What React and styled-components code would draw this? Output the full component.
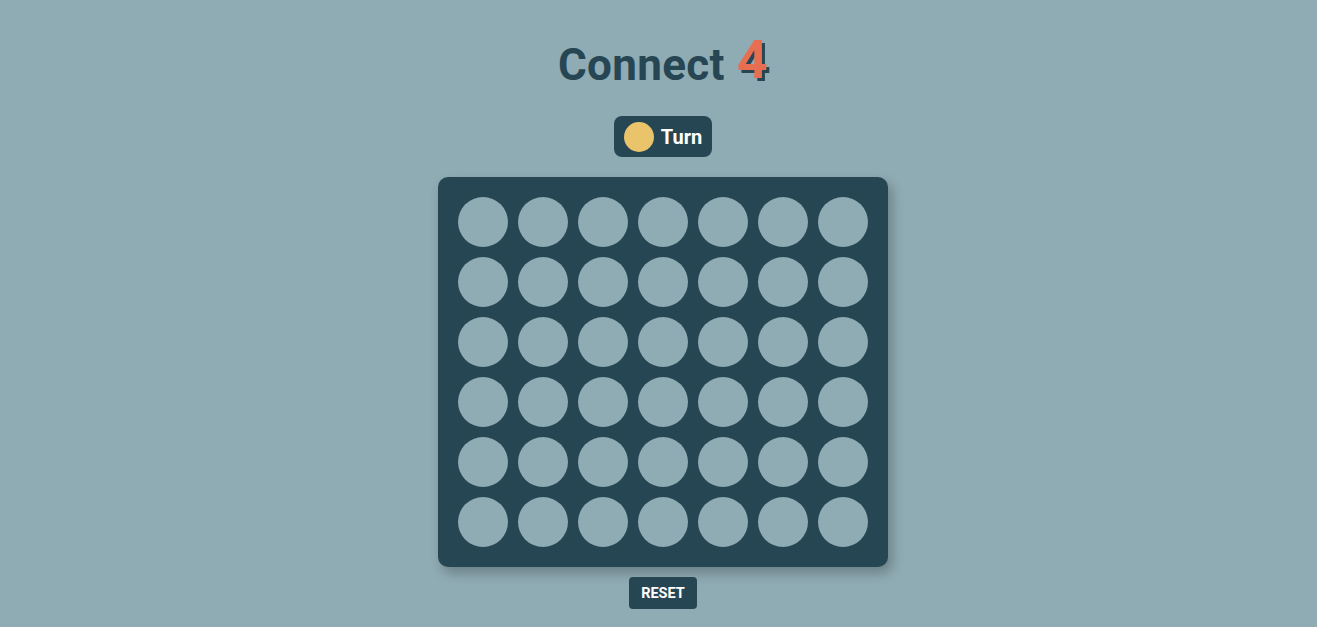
import React, { useState } from "react";
import styled, { createGlobalStyle } from "styled-components";

const GlobalStyle = createGlobalStyle`
  html, body {
    margin: 0;
    padding: 0;
    background: #8fabb3;
    font-family: Roboto, "Liberation Sans", sans-serif;
  }
`;

const Page = styled.div`
  min-height: 627px;
  display: flex;
  flex-direction: column;
  align-items: center;
  padding: 35px 0 0 9px;
  box-sizing: border-box;
`;

const Title = styled.h1`
  margin: 0;
  height: 61px;
  display: flex;
  align-items: flex-end;
  color: #264653;
  font-size: 44px;
  font-weight: 700;
  letter-spacing: 0.3px;
  line-height: 1;
  padding-bottom: 9px;
  box-sizing: border-box;

  .four {
    color: #e76f51;
    font-size: 54px;
    margin-left: 12px;
    text-shadow: 3px 3px 0 #264653;
  }
`;

const TurnBadge = styled.div`
  margin-top: 20px;
  display: flex;
  align-items: center;
  gap: 7px;
  height: 41px;
  padding: 0 10px;
  box-sizing: border-box;
  background: #264653;
  border-radius: 8px;
  color: #fff;
  font-size: 20px;
  font-weight: 700;
`;

const Disc = styled.span`
  width: 30px;
  height: 30px;
  border-radius: 50%;
  background: ${(p) => (p.$player === "red" ? "#e76f51" : "#e9c46a")};
`;

const Board = styled.div`
  margin-top: 20px;
  display: grid;
  grid-template-columns: repeat(7, 50px);
  grid-auto-rows: 50px;
  gap: 10px;
  padding: 20px;
  background: #264653;
  border-radius: 10px;
  box-shadow: 4px 6px 12px rgba(0, 0, 0, 0.25);
`;

const Cell = styled.button`
  width: 50px;
  height: 50px;
  padding: 0;
  border: none;
  border-radius: 50%;
  cursor: pointer;
  background: ${(p) =>
    p.$value === "red" ? "#e76f51" : p.$value === "yellow" ? "#e9c46a" : "#8fabb3"};
`;

const ResetButton = styled.button`
  margin-top: 10px;
  height: 32px;
  padding: 0 12px;
  border: none;
  border-radius: 4px;
  background: #264653;
  color: #fff;
  font-family: inherit;
  font-size: 14.5px;
  font-weight: 700;
  cursor: pointer;
`;

const ROWS = 6;
const COLS = 7;
const emptyBoard = () => Array.from({ length: ROWS }, () => Array(COLS).fill(null));

export default function App() {
  const [board, setBoard] = useState(emptyBoard);
  const [turn, setTurn] = useState("yellow");

  const drop = (col) => {
    const next = board.map((r) => r.slice());
    for (let r = ROWS - 1; r >= 0; r--) {
      if (!next[r][col]) {
        next[r][col] = turn;
        setBoard(next);
        setTurn(turn === "yellow" ? "red" : "yellow");
        return;
      }
    }
  };

  return (
    <>
      <GlobalStyle />
      <Page>
        <Title>
          Connect<span className="four">4</span>
        </Title>
        <TurnBadge>
          <Disc $player={turn} />
          Turn
        </TurnBadge>
        <Board>
          {board.map((row, r) =>
            row.map((v, c) => <Cell key={`${r}-${c}`} $value={v} onClick={() => drop(c)} />)
          )}
        </Board>
        <ResetButton
          onClick={() => {
            setBoard(emptyBoard());
            setTurn("yellow");
          }}
        >
          RESET
        </ResetButton>
      </Page>
    </>
  );
}
